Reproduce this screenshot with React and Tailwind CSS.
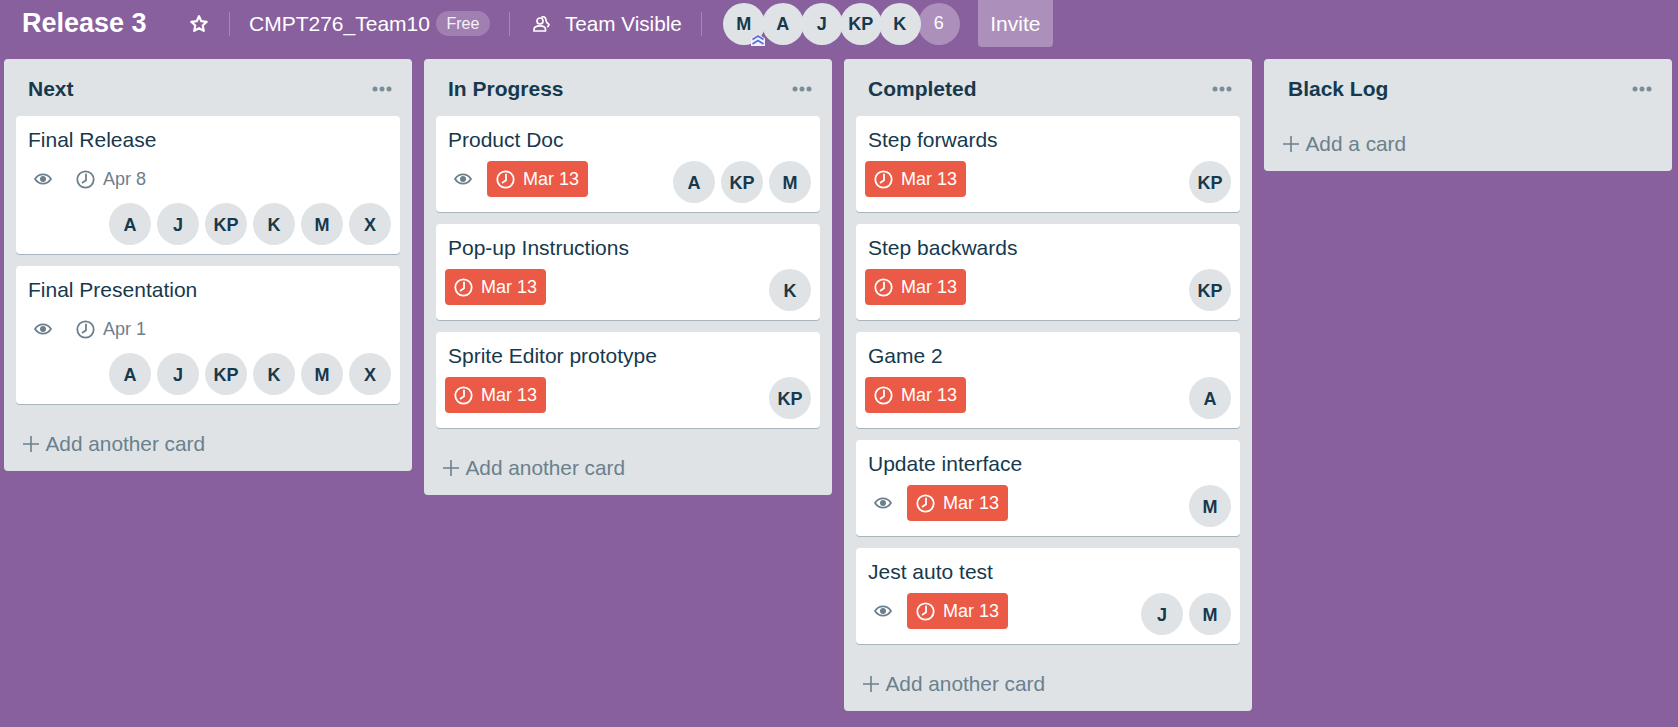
import React from "react";

const lists = [
  {
    title: "Next",
    cards: [
      { title: "Final Release", eye: true, due: "Apr 8", members: ["A", "J", "KP", "K", "M", "X"], wrap: true },
      { title: "Final Presentation", eye: true, due: "Apr 1", members: ["A", "J", "KP", "K", "M", "X"], wrap: true },
    ],
  },
  {
    title: "In Progress",
    cards: [
      { title: "Product Doc", eye: true, due: "Mar 13", late: true, members: ["A", "KP", "M"] },
      { title: "Pop-up Instructions", due: "Mar 13", late: true, members: ["K"] },
      { title: "Sprite Editor prototype", due: "Mar 13", late: true, members: ["KP"] },
    ],
  },
  {
    title: "Completed",
    cards: [
      { title: "Step forwards", due: "Mar 13", late: true, members: ["KP"] },
      { title: "Step backwards", due: "Mar 13", late: true, members: ["KP"] },
      { title: "Game 2", due: "Mar 13", late: true, members: ["A"] },
      { title: "Update interface", eye: true, due: "Mar 13", late: true, members: ["M"] },
      { title: "Jest auto test", eye: true, due: "Mar 13", late: true, members: ["J", "M"] },
    ],
  },
  { title: "Black Log", cards: [], addLabel: "Add a card" },
];

const StarIcon = () => (
  <svg width="20" height="20" viewBox="0 0 20 20" fill="none" stroke="white" strokeWidth="2.2" strokeLinejoin="round">
    <path d="M10 2.200l2.300 5 5.400.6-4 3.700 1.100 5.400L10 14.200l-4.800 2.700 1.100-5.400-4-3.700 5.400-.6z" />
  </svg>
);

const TeamIcon = () => (
  <svg width="17" height="16" viewBox="0 0 17 16" fill="none" stroke="white" strokeWidth="1.700" strokeLinejoin="round">
    <circle cx="7" cy="5" r="3" />
    <path d="M1 15v-1.500C1 11 3.500 9.800 7 9.800s5.500 1.200 5.500 3.700V15z" />
    <path d="M8.500 1.200C10.800 0 13 1.500 13 4.500c0 2 1.500 3 3 4-.3 1.200-1 2-1.800 2.500" />
  </svg>
);

const EyeIcon = () => (
  <svg width="18" height="12" viewBox="0 0 18 12" fill="none">
    <path d="M1 6c2-3 4.800-4.600 8-4.600S15 3 17 6c-2 3-4.800 4.600-8 4.600S3 9 1 6z" stroke="#6b808c" strokeWidth="1.800" />
    <circle cx="9" cy="6" r="3" fill="#6b808c" />
  </svg>
);

const ClockIcon = ({ color }) => (
  <svg width="19" height="19" viewBox="0 0 19 19" fill="none" stroke={color} strokeWidth="1.800">
    <circle cx="9.500" cy="9.500" r="8.200" />
    <path d="M10 3.800V10.200L6 13" />
  </svg>
);

const PlusIcon = () => (
  <svg width="18" height="18" viewBox="0 0 18 18" stroke="#6b808c" strokeWidth="1.600">
    <path d="M9 1v16M1 9h16" />
  </svg>
);

const DotsIcon = () => (
  <svg width="20" height="6" viewBox="0 0 20 6" fill="#798d99">
    <circle cx="3" cy="3" r="2.500" />
    <circle cx="10" cy="3" r="2.500" />
    <circle cx="17" cy="3" r="2.500" />
  </svg>
);

const AdminChevrons = () => (
  <svg className="absolute left-[28px] top-[31px]" width="14" height="12" viewBox="0 0 14 12" fill="none">
    <path d="M0 4.500L7 0l7 4.500V12H0z" fill="#eef0fa" />
    <path d="M1.500 5.500L7 2l5.500 3.500" stroke="#5f6bd6" strokeWidth="1.600" />
    <path d="M1.500 10L7 6.500 12.500 10" stroke="#5f6bd6" strokeWidth="1.600" />
  </svg>
);

function Avatar({ label }) {
  return (
    <div className="flex h-[42px] w-[42px] shrink-0 items-center justify-center rounded-full bg-[#dfe3e6] text-[18px] font-bold text-[#17394d]">
      <span className="mt-[2px]">{label}</span>
    </div>
  );
}

function Card({ card }) {
  const badges = (
    <div className="flex h-[36px] items-center pl-[9px]">
      {card.eye && (
        <div className="mr-[6px] flex h-[36px] w-[36px] items-center justify-center">
          <EyeIcon />
        </div>
      )}
      {card.late ? (
        <div className="flex h-[36px] items-center rounded-[4px] bg-[#eb5a46] pl-[9px] pr-[9px] text-[18px] text-white">
          <ClockIcon color="#ffffff" />
          <span className="ml-[8px]">{card.due}</span>
        </div>
      ) : (
        <div className="flex h-[36px] items-center pl-[9px] text-[18px] text-[#6b808c]">
          <ClockIcon color="#6b808c" />
          <span className="ml-[8px]">{card.due}</span>
        </div>
      )}
    </div>
  );
  const avatars = (
    <div className="flex justify-end gap-[6px]">
      {card.members.map((m, i) => (
        <Avatar key={i} label={m} />
      ))}
    </div>
  );

  return (
    <div className="mb-[12px] rounded-[4px] bg-white pb-[9px] pl-0 pr-[9px] pt-[9px] shadow-[0_1px_0_rgba(9,45,66,0.25)]">
      <div className="mb-[6px] pl-[12px] text-[21px] leading-[30px] text-[#17394d]">{card.title}</div>
      {card.wrap ? (
        <>
          <div className="mb-[6px]">{badges}</div>
          {avatars}
        </>
      ) : (
        <div className="flex items-start justify-between">
          {badges}
          {avatars}
        </div>
      )}
    </div>
  );
}

function List({ list }) {
  return (
    <div className="w-[408px] shrink-0 rounded-[4px] bg-[#dfe3e6]">
      <div className="flex h-[57px] items-start justify-between pl-[24px] pr-[20px] pt-[15px]">
        <h2 className="text-[21px] font-bold leading-[30px] text-[#17394d]">{list.title}</h2>
        <div className="mt-[12px] flex">
          <DotsIcon />
        </div>
      </div>
      <div className="px-[12px]">
        {list.cards.map((c, i) => (
          <Card key={i} card={c} />
        ))}
      </div>
      <div className="flex h-[55px] items-center pl-[18px] text-[20.800px] text-[#6b808c]">
        <PlusIcon />
        <span className="ml-[5.500px]">{list.addLabel || "Add another card"}</span>
      </div>
    </div>
  );
}

export default function App() {
  return (
    <div className="h-[727px] w-[1678px] overflow-hidden bg-[#89609e] font-['Liberation_Sans',Arial,sans-serif]">
      <div className="mb-[12px] flex h-[47px] items-center pl-[22px] text-white">
        <h1 className="w-[126px] whitespace-nowrap text-[27px] font-bold leading-none">Release 3</h1>
        <div className="ml-[41px] flex">
          <StarIcon />
        </div>
        <div className="ml-[20px] h-[24px] w-px bg-white/25" />
        <span className="ml-[19px] text-[21px]">CMPT276_Team10</span>
        <span className="ml-[6px] flex h-[25px] w-[54px] items-center justify-center rounded-full bg-white/20 text-[16px] text-white/90">
          Free
        </span>
        <div className="ml-[19px] h-[24px] w-px bg-white/25" />
        <div className="ml-[23px] flex">
          <TeamIcon />
        </div>
        <span className="ml-[15px] text-[20.700px]">Team Visible</span>
        <div className="ml-[19px] h-[24px] w-px bg-white/25" />
        <div className="ml-[21px] flex">
          {["M", "A", "J", "KP", "K"].map((m, i) => (
            <div key={i} className={`relative ${i > 0 ? "-ml-[3px]" : ""}`}>
              <Avatar label={m} />
              {i === 0 && <AdminChevrons />}
            </div>
          ))}
          <div className="-ml-[3px] flex h-[42px] w-[42px] items-center justify-center rounded-full bg-white/30 text-[18px]">
            6
          </div>
        </div>
        <div className="ml-[18px] flex h-[47px] w-[75px] items-center justify-center rounded-b-[4px] bg-white/30 text-[21px]">
          Invite
        </div>
      </div>
      <div className="flex items-start gap-[12px] pl-[4px]">
        {lists.map((l, i) => (
          <List key={i} list={l} />
        ))}
      </div>
    </div>
  );
}
